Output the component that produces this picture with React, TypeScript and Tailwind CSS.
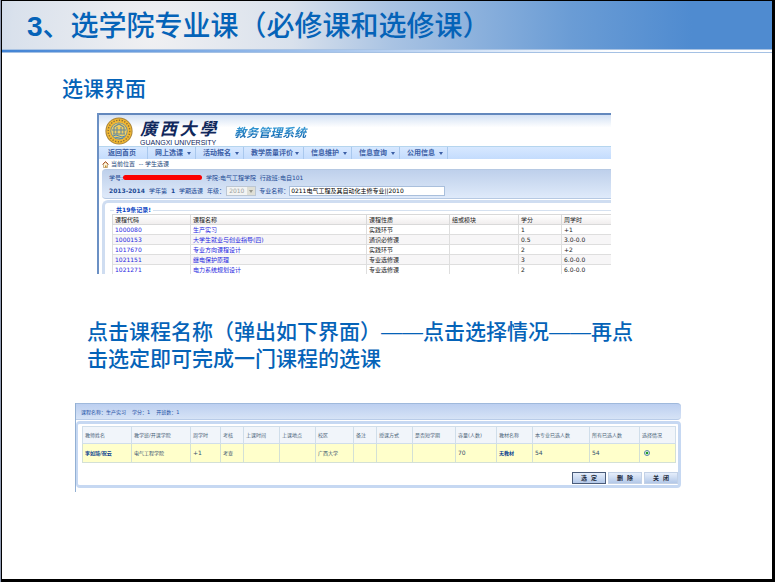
import { ReactNode } from "react"

const navItems = [
  { label: "返回首页", width: "w-10", menu: false },
  { label: "网上选课", width: "w-12", menu: true },
  { label: "活动报名", width: "w-12", menu: true },
  { label: "教学质量评价", width: "w-[60px]", menu: true },
  { label: "信息维护", width: "w-12", menu: true },
  { label: "信息查询", width: "w-12", menu: true },
  { label: "公用信息", width: "w-12", menu: true },
]

const courseColumns = [
  { label: "课程代码", width: "w-[78px]" },
  { label: "课程名称", width: "w-[176px]" },
  { label: "课程性质", width: "w-[83px]" },
  { label: "组或模块", width: "w-[69px]" },
  { label: "学分", width: "w-[43px]" },
  { label: "周学时", width: "w-[50px]" },
]

const courses = [
  { code: "1000080", name: "生产实习", kind: "实践环节", credit: "1", hours: "+1" },
  { code: "1000153", name: "大学生就业与创业指导(四)", kind: "通识必修课", credit: "0.5", hours: "3.0-0.0" },
  { code: "1017670", name: "专业方向课程设计", kind: "实践环节", credit: "2", hours: "+2" },
  { code: "1021151", name: "继电保护原理", kind: "专业选修课", credit: "3", hours: "6.0-0.0" },
  { code: "1021271", name: "电力系统规划设计", kind: "专业选修课", credit: "2", hours: "6.0-0.0" },
]

const classColumns = [
  { label: "教师姓名", width: "w-[49px]", value: "李如琦/祝云", style: "font-bold text-[#0c3f90]" },
  { label: "教学班/开课学院", width: "w-[59px]", value: "电气工程学院", style: "" },
  { label: "周学时", width: "w-[30px]", value: "+1", style: "text-[6px]" },
  { label: "考核", width: "w-[23px]", value: "考查", style: "" },
  { label: "上课时间", width: "w-9", value: "", style: "" },
  { label: "上课地点", width: "w-9", value: "", style: "" },
  { label: "校区", width: "w-[38px]", value: "广西大学", style: "" },
  { label: "备注", width: "w-[23px]", value: "", style: "" },
  { label: "授课方式", width: "w-9", value: "", style: "" },
  { label: "是否短学期", width: "w-[43px]", value: "", style: "" },
  { label: "容量(人数)", width: "w-[41px]", value: "70", style: "text-[6px]" },
  { label: "教材名称", width: "w-9", value: "无教材", style: "font-bold text-[#0c3f90]" },
  { label: "本专业已选人数", width: "w-[57px]", value: "54", style: "text-[6px]" },
  { label: "所有已选人数", width: "w-[50px]", value: "54", style: "text-[6px]" },
]

function Arrow({ className }: { className: string }) {
  return (
    <svg className={className} viewBox="0 0 4 3" fill="currentColor" aria-hidden="true">
      <path d="M0 0h4L2 3z" />
    </svg>
  )
}

function Seal() {
  return (
    <svg className="h-7 w-7 shrink-0" viewBox="0 0 28 28" aria-hidden="true">
      <circle cx="14" cy="14" r="13.6" fill="#a9843a" />
      <circle cx="14" cy="14" r="12.6" fill="#f1b834" />
      <circle cx="14" cy="14" r="10.8" fill="none" stroke="#8c6f35" strokeWidth="1.4" strokeDasharray="1.3 1.5" />
      <circle cx="14" cy="14" r="8.6" fill="#5b86a8" />
      <circle cx="14" cy="14" r="7.8" fill="#f2cf62" />
      <path d="M7 13h14M9 10l5-3 5 3M9 10v7M12 10v7M16 10v7M19 10v7M8 17h12" stroke="#66899a" strokeWidth="1.1" fill="none" />
      <path d="M8 19q3-2 6 0t6 0M10 21q2-1 4 0t4 0" stroke="#4d86b5" strokeWidth="1" fill="none" />
    </svg>
  )
}

function HomeIcon() {
  return (
    <svg className="h-[7px] w-[7px]" viewBox="0 0 14 14" aria-hidden="true">
      <path d="M3 6v7h8V6L7 2z" fill="#fff7dc" stroke="#8a6a2a" />
      <path d="M1 7l6-6 6 6" fill="none" stroke="#b0562c" strokeWidth="2" />
      <path d="M6 9h3v4H6z" fill="#c7892b" />
    </svg>
  )
}

function SystemPage() {
  return (
    <section className="h-[161px] overflow-hidden border-l-2 border-[#6b90c4] bg-white font-['DejaVu_Sans','Noto_Sans_CJK_SC',sans-serif] text-[6px] leading-[10px] text-[#1c4a94]">
      <div className="flex h-[33px] border-t-2 border-[#6388bd] bg-linear-to-b from-[#d3e1f4] to-white to-40% pl-[6px]">
        <div className="flex items-center">
          <Seal />
          <div className="ml-[7px] mt-1 text-[#10285c]">
            <div className="flex justify-between text-[17px] font-bold italic leading-[20px]">
              {["廣", "西", "大", "學"].map((char) => (
                <span key={char}>{char}</span>
              ))}
            </div>
            <div className="font-['Liberation_Sans',sans-serif] text-[7px] leading-[8px]">GUANGXI UNIVERSITY</div>
          </div>
          <h2 className="ml-[18px] mt-1 bg-linear-to-b from-[#3ba3dc] to-[#0c5ba6] bg-clip-text pr-1 text-[12px] font-bold italic leading-[16px] text-transparent">
            教务管理系统
          </h2>
        </div>
      </div>

      <nav className="flex h-[13px] border-t border-[#b5d5ee] bg-linear-to-b from-[#d7e8ff] to-[#c4dcfd] pl-[9px] text-[7px] font-bold leading-[11px] text-[#3c5fa6]">
        {navItems.map((item) => (
          <a
            key={item.label}
            href="#"
            className={`${item.width} flex items-center justify-between border-r border-[#a9c8ee] pr-1 ${item.menu ? "pl-[7px]" : ""}`}
          >
            <span className="whitespace-nowrap">{item.label}</span>
            {item.menu && <Arrow className="h-[3px] w-1 shrink-0" />}
          </a>
        ))}
      </nav>

      <div className="flex h-[10px] items-center gap-[2px] pl-[3px] text-[#24487c]">
        <HomeIcon />
        <span>当前位置 &nbsp;-- 学生选课</span>
      </div>

      <div className="ml-[3px] h-[30px] rounded-l-sm border-y border-[#b6c9e3] bg-linear-to-b from-[#bed0eb] to-[#dfeafa] pl-[7px] pt-[2px]">
        <div className="flex h-[11px] items-center">
          <span>学号:</span>
          <span className="h-[5px] w-[79px] rounded-full bg-[#fb0000]" />
          <span className="ml-1">学院:电气工程学院&nbsp; 行政班:电自101</span>
        </div>
        <form className="mt-[2px] flex h-3 items-center whitespace-nowrap">
          <span className="flex gap-1">
            <b>2013-2014</b>
            <span>学年第</span>
            <b>1</b>
            <span>学期选课</span>
          </span>
          <label htmlFor="grade" className="ml-1">
            年级：
          </label>
          <span className="relative ml-px flex">
            <select
              id="grade"
              disabled
              className="h-[10px] w-[30px] appearance-none border border-[#bcc7d4] bg-[#f3f4f3] pl-[2px] leading-[8px] text-[#9b9f9f]"
            >
              <option>2010</option>
            </select>
            <span className="absolute right-px top-px flex h-2 w-2 items-center justify-center bg-[#dfdfd6] text-[#96978e]">
              <Arrow className="h-[3px] w-1" />
            </span>
          </span>
          <label htmlFor="major" className="ml-[3px]">
            专业名称：
          </label>
          <input
            id="major"
            defaultValue="0211电气工程及其自动化主修专业||2010"
            className="h-[10px] w-[156px] border border-[#a9bfdc] bg-white px-px text-black"
          />
        </form>
      </div>

      <div className="ml-[3px] mt-px rounded-tl-md border-l-[3px] border-t-[3px] border-[#cfddf1] pl-[5px] pt-[3px]">
        <div className="flex h-[8px] items-center leading-[8px]">
          <span className="w-1 border-t border-[#d5e1f0]" />
          <b className="px-[2px] text-[#0d46c4]">共19条记录!</b>
          <span className="flex-1 border-t border-[#d5e1f0]" />
        </div>
        <table className="ml-[2px] w-[calc(100%-2px)] table-fixed border-collapse text-left leading-[9px] text-[#222]">
          <thead>
            <tr className="h-[10px] bg-linear-to-b from-white to-[#efecec]">
              {courseColumns.map((col) => (
                <th key={col.label} className={`${col.width} border border-r-0 border-[#d9d9d9] p-0 pl-[2px] font-normal`}>
                  {col.label}
                </th>
              ))}
            </tr>
          </thead>
          <tbody>
            {courses.map((course) => (
              <tr key={course.code} className="h-[10px] even:bg-[#f7f6f7] *:border *:border-r-0 *:border-[#dedede] *:p-0 *:pl-[2px]">
                <td>
                  <a href="#" className="text-[#1f1fe0]">{course.code}</a>
                </td>
                <td>
                  <a href="#" className="text-[#1f1fe0]">{course.name}</a>
                </td>
                <td>{course.kind}</td>
                <td></td>
                <td>{course.credit}</td>
                <td>{course.hours}</td>
              </tr>
            ))}
          </tbody>
        </table>
      </div>
    </section>
  )
}

function DialogButton({ children, active = false }: { children: ReactNode; active?: boolean }) {
  return (
    <button
      type="button"
      className={`flex h-3 w-[34px] items-center justify-center whitespace-pre border bg-linear-to-b from-[#e6eefb] to-[#b3c8e8] text-[6px] font-bold leading-[10px] text-[#222b3c] ${
        active ? "border-[#4a5c7a]" : "border-[#c3d1e6]"
      }`}
    >
      {children}
    </button>
  )
}

function ClassDialog() {
  return (
    <section className="border-l border-[#93b0d3] pb-1 font-['DejaVu_Sans','Noto_Sans_CJK_SC',sans-serif] text-[5px] leading-[8px] text-[#4b6378]">
      <div className="flex h-[17px] items-center gap-[6px] rounded-r-sm border-b border-t border-b-[#b9cce8] border-t-[#9fb9dc] bg-linear-to-b from-[#bccff0] to-[#d6e3f6] pl-[5px] text-[#2450a4]">
        <span>课程名称：生产实习</span>
        <span>学分：1</span>
        <span>开班数：1</span>
      </div>
      <div className="mt-px rounded border-[3px] border-l-2 border-[#c6d8f2] bg-white pb-px">
        <div className="pl-1 pr-[3px] pt-[2px]">
          <table className="w-full table-fixed border-collapse text-left">
            <thead>
              <tr className="h-[17px] bg-[#f1f5fa]">
                {classColumns.map((col) => (
                  <th key={col.label} className={`${col.width} whitespace-nowrap border border-[#d0deea] p-0 pl-[2px] font-normal`}>
                    {col.label}
                  </th>
                ))}
                <th className="w-9 whitespace-nowrap border border-[#d0deea] p-0 pl-[2px] font-normal">选择情况</th>
              </tr>
            </thead>
            <tbody>
              <tr className="h-[19px] bg-[#ffffcb] text-[#34506b]">
                {classColumns.map((col) => (
                  <td key={col.label} className={`whitespace-nowrap border border-[#d3e0d6] p-0 pl-[2px] ${col.style}`}>
                    {col.value}
                  </td>
                ))}
                <td className="border border-[#d3e0d6] p-0 pl-1">
                  <input
                    type="radio"
                    name="pick"
                    aria-label="选择情况"
                    defaultChecked
                    className="block h-[6px] w-[6px] appearance-none rounded-full border border-[#5c86a3] bg-white bg-radial from-[#22a022] from-40% to-white to-60%"
                  />
                </td>
              </tr>
            </tbody>
          </table>
        </div>
        <div className="mt-[9px] flex justify-end gap-[2px]">
          <DialogButton active>选  定</DialogButton>
          <DialogButton>删  除</DialogButton>
          <DialogButton>关  闭</DialogButton>
        </div>
      </div>
    </section>
  )
}

export default function App() {
  return (
    <div className="flex min-h-screen border-l border-[#8f9ab2] bg-black pb-[3px] pl-px pr-[3px] pt-px font-['Liberation_Sans','Noto_Sans_CJK_SC',sans-serif] text-[#0563b8]">
      <main className="min-w-0 flex-1 bg-white">
        <header>
          <div className="flex h-[49px] items-center border-b border-[#a9c3e3] bg-[radial-gradient(circle_at_150px_35px,#f0f0f2_0px,#d9e1ec_140px,#a9c3e3_240px,#6a9cd5_420px,#4f8bd0_540px)] pl-[25px] pt-1">
            <h1 className="whitespace-nowrap text-[28px] font-medium leading-[36px]">
              <b>3</b>、选学院专业课（必修课和选修课）
            </h1>
          </div>
          <div className="h-[3px] border-b border-[#a5c1e4] bg-linear-to-r from-[#4183d4] to-white to-80%" />
        </header>

        <h2 className="ml-[60px] mt-[22px] text-[21px] font-medium leading-[27px]">选课界面</h2>

        <div className="ml-[95px] mr-[161px] mt-[11px]">
          <SystemPage />
        </div>

        <p className="ml-[85px] mr-[120px] mt-11 text-[21px] font-medium leading-[27px]">
          点击课程名称（弹出如下界面）——点击选择情况——再点击选定即可完成一门课程的选课
        </p>

        <div className="ml-[73px] mr-[91px] mt-[31px]">
          <ClassDialog />
        </div>
      </main>
    </div>
  )
}
